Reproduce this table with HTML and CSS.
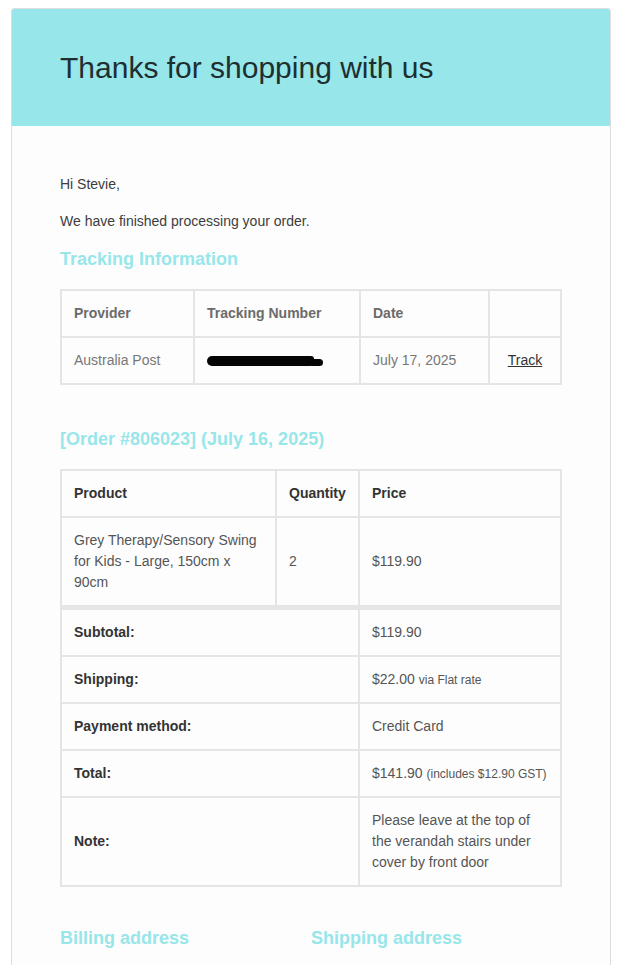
FILE: index.html
```html
<!DOCTYPE html>
<html lang="en">
<head>
<meta charset="utf-8">
<title>Thanks for shopping with us</title>
<link rel="stylesheet" href="styles.css">
</head>
<body>
<div class="wrapper">
  <div class="container">
    <div class="header">
      <h1>Thanks for shopping with us</h1>
    </div>
    <div class="content">
      <p>Hi Stevie,</p>
      <p>We have finished processing your order.</p>

      <h2>Tracking Information</h2>
      <table class="track-table">
        <colgroup>
          <col class="c-prov"><col class="c-num"><col class="c-date"><col class="c-link">
        </colgroup>
        <thead>
          <tr>
            <th>Provider</th>
            <th>Tracking Number</th>
            <th>Date</th>
            <th></th>
          </tr>
        </thead>
        <tbody>
          <tr>
            <td>Australia Post</td>
            <td><span class="redact"><span class="redact-main"></span><span class="redact-tail"></span></span></td>
            <td>July 17, 2025</td>
            <td class="center"><a href="#" class="track-link">Track</a></td>
          </tr>
        </tbody>
      </table>

      <h2 class="order-title">[Order #806023] (July 16, 2025)</h2>
      <table class="order-table">
        <colgroup>
          <col class="c-product"><col class="c-qty"><col class="c-price">
        </colgroup>
        <thead>
          <tr>
            <th>Product</th>
            <th>Quantity</th>
            <th>Price</th>
          </tr>
        </thead>
        <tbody>
          <tr>
            <td>Grey Therapy/Sensory Swing for Kids - Large, 150cm x 90cm</td>
            <td>2</td>
            <td>$119.90</td>
          </tr>
        </tbody>
        <tfoot>
          <tr class="first">
            <th colspan="2">Subtotal:</th>
            <td>$119.90</td>
          </tr>
          <tr>
            <th colspan="2">Shipping:</th>
            <td>$22.00 <small>via Flat rate</small></td>
          </tr>
          <tr>
            <th colspan="2">Payment method:</th>
            <td>Credit Card</td>
          </tr>
          <tr>
            <th colspan="2">Total:</th>
            <td>$141.90 <small>(includes $12.90 GST)</small></td>
          </tr>
          <tr>
            <th colspan="2">Note:</th>
            <td>Please leave at the top of the verandah stairs under cover by front door</td>
          </tr>
        </tfoot>
      </table>

      <div class="addresses">
        <div class="addr-col"><h2>Billing address</h2></div>
        <div class="addr-col"><h2>Shipping address</h2></div>
      </div>
    </div>
  </div>
</div>
</body>
</html>
```

FILE: styles.css
```css
html, body {
  margin: 0;
  padding: 0;
  background: #ffffff;
}

body {
  font-family: "Liberation Sans", Arial, Helvetica, sans-serif;
  overflow: hidden;
}

.wrapper {
  padding-top: 8px;
  padding-left: 11px;
  display: flex;
  justify-content: flex-start;
}

.container {
  width: 600px;
  box-sizing: border-box;
  border: 1px solid #dedede;
  border-radius: 3px;
  background: #fdfdfd;
  overflow: hidden;
}

.header {
  background: #97e6ea;
  padding: 36px 48px;
}

.header h1 {
  margin: 0;
  font-size: 30px;
  font-weight: 300;
  line-height: 45px;
  color: #1d2f30;
}

.content {
  padding: 48px 48px 0 48px;
  color: #3c3c3c;
  font-size: 14px;
  line-height: 21px;
}

.content p {
  margin: 0 0 16px;
}

h2 {
  color: #97e6ea;
  font-size: 18px;
  font-weight: bold;
  line-height: 23px;
  margin: 0 0 18px;
}

table {
  width: 500px;
  border-collapse: collapse;
  table-layout: fixed;
}

th, td {
  border: 2px solid #e5e5e5;
  padding: 12px 12px;
  text-align: left;
  vertical-align: middle;
  font-size: 14px;
  line-height: 21px;
}

.track-table th {
  color: #6b6b6b;
  font-weight: bold;
}

.track-table td {
  color: #777777;
}

.c-prov { width: 133px; }
.c-num { width: 166px; }
.c-date { width: 129px; }
.c-link { width: 72px; }

.center { text-align: center !important; }

.track-link {
  color: #333333;
  text-decoration: underline;
}

.redact {
  display: inline-flex;
  align-items: center;
  vertical-align: middle;
}

.redact-main {
  display: inline-block;
  width: 107px;
  height: 10px;
  background: #050505;
  border-radius: 5px 3px 3px 5px;
}

.redact-tail {
  display: inline-block;
  width: 11px;
  height: 7px;
  margin-left: -2px;
  margin-top: 2px;
  background: #050505;
  border-radius: 0 4px 4px 0;
}

.order-title {
  margin-top: 43px;
  margin-bottom: 18px;
}

.order-table th {
  color: #333333;
  font-weight: bold;
}

.order-table td {
  color: #555555;
}

.c-product { width: 215px; }
.c-qty { width: 83px; }
.c-price { width: 202px; }

.order-table tfoot tr.first th,
.order-table tfoot tr.first td {
  border-top-width: 5px;
}

.order-table small {
  font-size: 12px;
  line-height: 1;
}

.addresses {
  display: flex;
  margin-top: 40px;
}

.addr-col {
  width: 251px;
}
```
